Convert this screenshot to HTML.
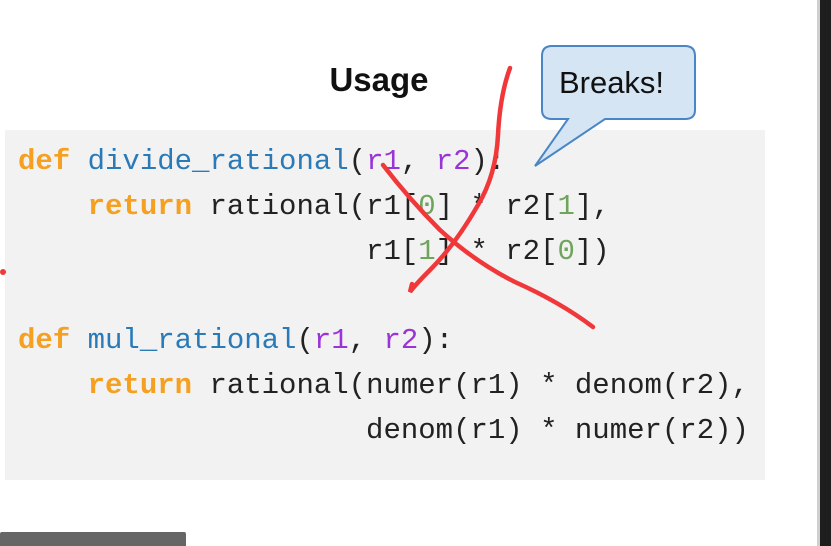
<!DOCTYPE html>
<html><head><meta charset="utf-8"><style>
html,body{margin:0;padding:0;width:831px;height:546px;overflow:hidden;background:#fff;position:relative;font-family:"Liberation Sans",sans-serif}
.title{position:absolute;left:0;width:758px;text-align:center;top:61px;font-size:33px;font-weight:bold;color:#111}
.code{position:absolute;left:5px;top:130px;width:760px;height:350px;background:#f2f2f2}
pre{position:absolute;left:18px;top:140px;margin:0;font-family:"Liberation Mono",monospace;font-size:29px;line-height:44.8px;color:#222}
.k{color:#f5a020;font-weight:bold}.f{color:#2a7ab8}.p{color:#9a34d6}.n{color:#6ea55a}
.rb{position:absolute;right:0;top:0;width:11px;height:546px;background:#1e1e1e}
.rb2{position:absolute;left:817px;top:0;width:4px;height:546px;background:#cfcfcf}
.btn{position:absolute;left:0;top:532px;width:186px;height:14px;background:#666;border-radius:2px 2px 0 0}
</style></head><body>
<div class="title">Usage</div>
<div class="code"></div>
<pre><span class="k">def</span> <span class="f">divide_rational</span>(<span class="p">r1</span>, <span class="p">r2</span>):
    <span class="k">return</span> rational(r1[<span class="n">0</span>] * r2[<span class="n">1</span>],
                    r1[<span class="n">1</span>] * r2[<span class="n">0</span>])

<span class="k">def</span> <span class="f">mul_rational</span>(<span class="p">r1</span>, <span class="p">r2</span>):
    <span class="k">return</span> rational(numer(r1) * denom(r2),
                    denom(r1) * numer(r2))</pre>
<svg width="831" height="546" style="position:absolute;left:0;top:0">
<path d="M552,46 H685 Q695,46 695,56 V110 Q695,119 685,119 H605 L535,166 L568,119 H552 Q542,119 542,110 V56 Q542,46 552,46 Z" fill="#d5e5f4" stroke="#4a86c5" stroke-width="2"/>
<text x="559" y="93" font-family="Liberation Sans,sans-serif" font-size="31" fill="#111" textLength="105">Breaks!</text>
<path d="M510,68 Q500,95 498,135 Q496,175 478,205 Q455,245 430,270 Q415,285 410,292 L412,284" fill="none" stroke="#f0383a" stroke-width="4.5" stroke-linecap="round"/>
<path d="M383,165 Q410,200 440,230 Q475,262 515,282 Q560,302 593,327" fill="none" stroke="#f0383a" stroke-width="4.5" stroke-linecap="round"/>
<circle cx="3" cy="272" r="3" fill="#f0383a"/>
</svg>
<div class="rb2"></div><div class="rb"></div>
<div class="btn"></div>
</body></html>
